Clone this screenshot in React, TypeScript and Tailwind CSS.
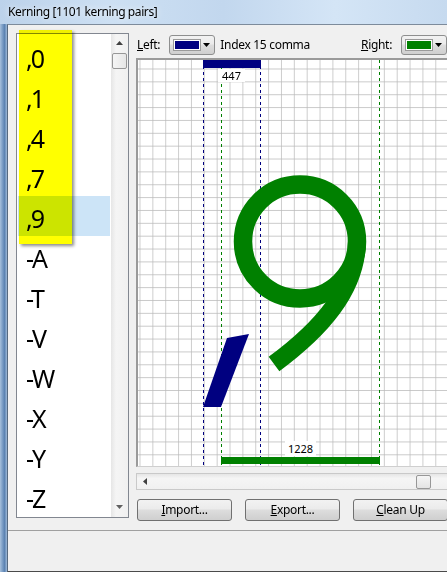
import React from 'react';

const pairs = [',0', ',1', ',4', ',7', ',9', '-A', '-T', '-V', '-W', '-X', '-Y', '-Z'];

const ui = { fontFamily: '"Noto Sans", "Open Sans", sans-serif' };

function DownArrow() {
  return (
    <svg width="7" height="4" viewBox="0 0 7 4">
      <path d="M0 0 H7 L3.5 4 Z" fill="#000" />
    </svg>
  );
}

function ColorCombo({ color }: { color: string }) {
  return (
    <div className="flex items-center h-[20px] w-[46px] rounded-[3px] border border-[#8e8f8f] bg-[linear-gradient(#f2f2f2,#ebebeb_45%,#dddddd_50%,#cfcfcf)] pl-[3px] pr-[4px]">
      <div className="h-[12px] w-[28px] border border-[#9a9a9a] p-[1px] bg-white">
        <div className="h-full w-full" style={{ background: color }} />
      </div>
      <div className="ml-auto flex items-center">
        <DownArrow />
      </div>
    </div>
  );
}

function WinButton({ hot, rest }: { hot: string; rest: string }) {
  return (
    <button className="h-[22px] w-[95px] rounded-[3px] border border-[#707070] bg-[linear-gradient(#f2f2f2,#ebebeb_45%,#dddddd_50%,#cfcfcf)] text-[12px] tracking-[-0.3px] text-black flex items-center justify-center">
      <span className="underline">{hot}</span>
      {rest}
    </button>
  );
}

export default function App() {
  return (
    <div className="relative w-[447px] h-[572px] overflow-hidden flex flex-col text-black" style={ui}>
      {/* Title bar */}
      <div className="h-[24px] shrink-0 flex items-center pl-[8px] bg-[linear-gradient(90deg,#bcd2ea_0%,#cde0f3_25%,#c2d7ee_50%,#d4e5f6_75%,#c6daef_100%)]">
        <span className="text-[12px] tracking-[-0.4px] [text-shadow:0_0_6px_#ffffff]">Kerning [1101 kerning pairs]</span>
      </div>

      <div className="flex flex-1">
        {/* glass frame strip */}
        <div className="w-[7px] shrink-0 bg-[linear-gradient(90deg,#a7c0dc_0%,#7c9ec6_35%,#5c83b2_65%,#9fbad9_100%)]" />

        {/* client area */}
        <div className="flex-1 flex flex-col border-l border-t border-b border-l-[#56697f] border-t-[#7d8b9b] border-b-[#4a4a4a] bg-[#f0f0f0]">
          <div className="h-[505px] shrink-0 flex pl-[8px] pt-[8px]">
            {/* list box */}
            <div className="w-[113px] h-[485px] shrink-0 flex border border-[#828790] bg-white">
              <div className="w-[94px] pt-[2px]">
                {pairs.map((p, i) => (
                  <div
                    key={p}
                    className={`h-[40px] mx-[1px] pl-[8px] flex items-center pt-[4px] text-[25px] leading-none tracking-[-2px] ${i === 4 ? 'bg-[#cce4f7]' : ''}`}
                  >
                    {p}
                  </div>
                ))}
              </div>
              <div className="w-[17px] flex flex-col items-center bg-[linear-gradient(90deg,#e6e6e6,#f5f5f5_30%,#f0f0f0)]">
                <div className="h-[18px] flex items-center justify-center">
                  <svg width="7" height="4" viewBox="0 0 7 4">
                    <path d="M0 4 H7 L3.5 0 Z" fill="#404040" />
                  </svg>
                </div>
                <div className="mt-[1px] h-[16px] w-[15px] rounded-[2px] border border-[#979797] bg-[linear-gradient(90deg,#f5f5f5,#e6e6e6)]" />
                <div className="mt-auto mb-[8px] flex items-center justify-center">
                  <svg width="7" height="4" viewBox="0 0 7 4">
                    <path d="M0 0 H7 L3.5 4 Z" fill="#606060" />
                  </svg>
                </div>
              </div>
            </div>

            {/* right panel */}
            <div className="ml-[7px] mt-[2px] w-[330px] shrink-0 flex flex-col">
              <div className="h-[20px] flex items-center text-[12px] tracking-[-0.3px]">
                <span className="ml-[1px]"><span className="underline">L</span>eft:</span>
                <div className="ml-[9px]">
                  <ColorCombo color="#000080" />
                </div>
                <span className="ml-[5px]">Index 15 comma</span>
                <span className="ml-[51px]"><span className="underline">R</span>ight:</span>
                <div className="ml-[9px]">
                  <ColorCombo color="#008000" />
                </div>
              </div>

              {/* glyph canvas */}
              <div className="relative mt-[3px] h-[409px] border-l-2 border-t-2 border-b border-l-[#9a9a9a] border-t-[#9a9a9a] border-b-[#cfcfcf] bg-white">
                <svg width="328" height="406" viewBox="138 60 328 406" className="block">
                  <defs>
                    <pattern id="grid" x="139.5" y="68.5" width="12.86" height="12.86" patternUnits="userSpaceOnUse">
                      <path d="M0 0 V12.86 M0 0 H12.86" stroke="#b9b9b9" strokeWidth="1.4" fill="none" />
                    </pattern>
                  </defs>
                  <rect x="138" y="60" width="328" height="406" fill="url(#grid)" />
                  <g strokeWidth="1" strokeDasharray="3 3">
                    <line x1="203.5" y1="60" x2="203.5" y2="466" stroke="#000080" />
                    <line x1="260.5" y1="60" x2="260.5" y2="466" stroke="#000080" />
                    <line x1="221.5" y1="60" x2="221.5" y2="466" stroke="#008000" />
                    <line x1="379.5" y1="60" x2="379.5" y2="466" stroke="#008000" />
                  </g>
                  <rect x="203" y="60" width="58" height="8" fill="#000080" />
                  <rect x="221" y="457" width="159" height="7" fill="#008000" />
                  <polygon points="227,338 249,334 221,407 203,407" fill="#000080" />
                  <circle cx="300" cy="241.5" r="57" stroke="#008000" strokeWidth="18.5" fill="none" />
                  <path d="M357 240 C357 290 320 330 274 364" stroke="#008000" strokeWidth="18" fill="none" />
                </svg>
                <span className="absolute left-[80px] top-[9px] w-[27px] h-[13px] bg-white text-[11px] leading-[13px] text-center">447</span>
                <span className="absolute left-[147px] top-[381px] w-[31px] h-[15px] bg-white text-[11px] leading-[15px] text-center">1228</span>
              </div>

              {/* horizontal scrollbar */}
              <div className="mt-[6px] h-[17px] flex items-center border border-[#c9c9c9] bg-[linear-gradient(#e6e6e6,#f5f5f5_30%,#f0f0f0)]">
                <div className="w-[16px] flex items-center justify-center">
                  <svg width="4" height="7" viewBox="0 0 4 7">
                    <path d="M4 0 V7 L0 3.5 Z" fill="#404040" />
                  </svg>
                </div>
                <div className="ml-[263px] h-[14px] w-[15px] rounded-[2px] border border-[#979797] bg-[linear-gradient(#f5f5f5,#e3e3e3)]" />
              </div>

              <div className="mt-[9px] ml-[1px] flex gap-[13px]">
                <WinButton hot="I" rest="mport..." />
                <WinButton hot="E" rest="xport..." />
                <WinButton hot="C" rest="lean Up" />
              </div>
            </div>
          </div>
          <div className="flex-1 border-t border-t-[#a0a0a0]" />
        </div>
      </div>

      {/* yellow annotation highlight */}
      <div className="absolute left-[19px] top-[30px] w-[53px] h-[214px] bg-[#ffff00] mix-blend-multiply shadow-[2px_2px_3px_rgba(0,0,0,0.45)]" />
    </div>
  );
}
